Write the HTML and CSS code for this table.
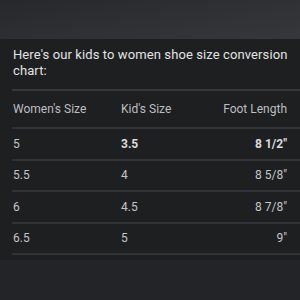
FILE: index.html
```html
<!DOCTYPE html>
<html>
<head>
<meta charset="utf-8">
<link rel="stylesheet" href="styles.css">
</head>
<body>
<div class="top"></div>
<div class="panel">
  <p class="intro">Here's our kids to women shoe size conversion chart:</p>
  <div class="table">
    <div class="row head">
      <span class="c1">Women's Size</span><span class="c2">Kid's Size</span><span class="c3">Foot Length</span>
    </div>
    <div class="row">
      <span class="c1">5</span><span class="c2 b">3.5</span><span class="c3 b">8 1/2″</span>
    </div>
    <div class="row">
      <span class="c1">5.5</span><span class="c2">4</span><span class="c3">8 5/8″</span>
    </div>
    <div class="row">
      <span class="c1">6</span><span class="c2">4.5</span><span class="c3">8 7/8″</span>
    </div>
    <div class="row">
      <span class="c1">6.5</span><span class="c2">5</span><span class="c3">9″</span>
    </div>
  </div>
</div>
</body>
</html>
```
FILE: styles.css
```css
html, body {
  margin: 0;
  padding: 0;
  background: #232427;
  font-family: Roboto, "Noto Sans", sans-serif;
}
.top {
  height: 39px;
  background: linear-gradient(170deg, #27282b 0%, #2f3033 50%, #36373a 100%);
}
.panel {
  background: #1e1f21;
  padding: 0 0 5px 12px;
}
.intro {
  margin: 0;
  padding: 8px 8px 10px 1px;
  font-size: 13px;
  line-height: 16px;
  letter-spacing: 0.1px;
  color: #e3e3e3;
  border-bottom: 2px solid #37383b;
}
.row {
  display: grid;
  grid-template-columns: 108px 1fr auto;
  align-items: center;
  height: 29.5px;
  padding: 0 13px 0 1px;
  border-bottom: 2px solid #323336;
  font-size: 12px;
  color: #c4c5c7;
}
.row.head {
  height: 36px;
  color: #bdbec0;
}
.c3 {
  text-align: right;
}
.b {
  font-weight: bold;
  color: #dcdcdc;
}
```
